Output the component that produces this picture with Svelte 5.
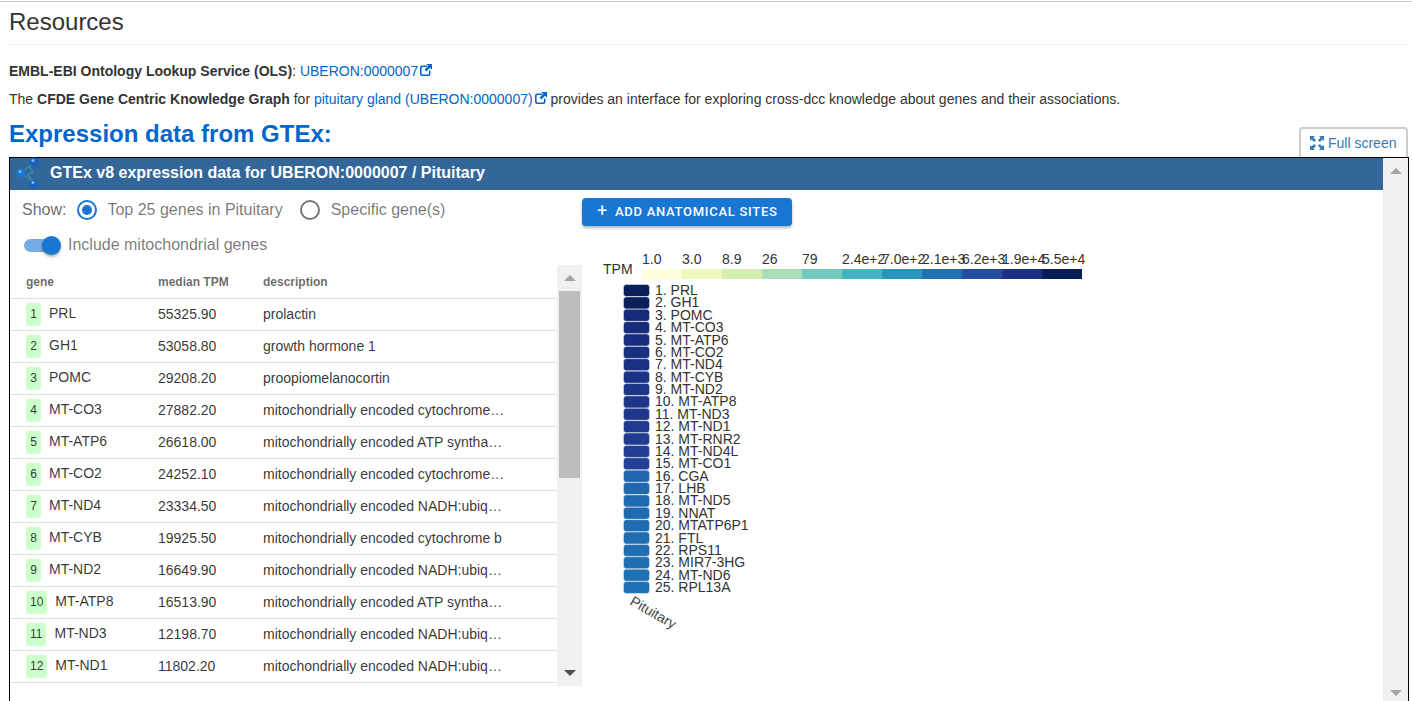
<script>
  const rows = [
    ['PRL', '55325.90', 'prolactin'],
    ['GH1', '53058.80', 'growth hormone 1'],
    ['POMC', '29208.20', 'proopiomelanocortin'],
    ['MT-CO3', '27882.20', 'mitochondrially encoded cytochrome c oxidase III'],
    ['MT-ATP6', '26618.00', 'mitochondrially encoded ATP synthase membrane subunit 6'],
    ['MT-CO2', '24252.10', 'mitochondrially encoded cytochrome c oxidase II'],
    ['MT-ND4', '23334.50', 'mitochondrially encoded NADH:ubiquinone oxidoreductase core subunit 4'],
    ['MT-CYB', '19925.50', 'mitochondrially encoded cytochrome b'],
    ['MT-ND2', '16649.90', 'mitochondrially encoded NADH:ubiquinone oxidoreductase core subunit 2'],
    ['MT-ATP8', '16513.90', 'mitochondrially encoded ATP synthase membrane subunit 8'],
    ['MT-ND3', '12198.70', 'mitochondrially encoded NADH:ubiquinone oxidoreductase core subunit 3'],
    ['MT-ND1', '11802.20', 'mitochondrially encoded NADH:ubiquinone oxidoreductase core subunit 1']
  ];

  const genes = ['PRL', 'GH1', 'POMC', 'MT-CO3', 'MT-ATP6', 'MT-CO2', 'MT-ND4', 'MT-CYB', 'MT-ND2', 'MT-ATP8',
    'MT-ND3', 'MT-ND1', 'MT-RNR2', 'MT-ND4L', 'MT-CO1', 'CGA', 'LHB', 'MT-ND5', 'NNAT', 'MTATP6P1',
    'FTL', 'RPS11', 'MIR7-3HG', 'MT-ND6', 'RPL13A'];

  const legend = [
    ['1.0', '#ffffd9'], ['3.0', '#eff9bd'], ['8.9', '#d5efb3'], ['26', '#a9ddb7'], ['79', '#73c9bd'],
    ['2.4e+2', '#45b4c2'], ['7.0e+2', '#2897bf'], ['2.1e+3', '#2073b2'], ['6.2e+3', '#234ea0'],
    ['1.9e+4', '#1c3185'], ['5.5e+4', '#081d58']
  ];

  function mix(a, b, t) {
    const c = a.map((v, i) => Math.round(v + (b[i] - v) * t));
    return `rgb(${c[0]},${c[1]},${c[2]})`;
  }

  // darkest bucket, then the two blue ranges of the scale
  function heat(i) {
    if (i < 2) return '#0a1f5c';
    if (i < 15) return mix([22, 41, 120], [35, 63, 150], (i - 2) / 12);
    return mix([34, 102, 173], [30, 115, 180], (i - 15) / 9);
  }
</script>

{#snippet ext()}
  <svg class="ext" viewBox="0 0 12 12"><path d="M2.200 1.500H7V3H2.800a1.200 1.200 0 0 0-1.200 1.200v5a1.200 1.200 0 0 0 1.200 1.200h5a1.200 1.200 0 0 0 1.200-1.200V6.500h1.500v3.300A2.200 2.200 0 0 1 8.300 12H2.200A2.200 2.200 0 0 1 0 9.800V3.700a2.200 2.200 0 0 1 2.200-2.200z"/><path d="M6.300 0H12v5.700L10 3.800 6.400 7.400 4.600 5.600 8.200 2z"/></svg>
{/snippet}

<div class="page">
  <h2 class="title">Resources</h2>
  <hr />
  <p class="first">
    <b>EMBL-EBI Ontology Lookup Service (OLS)</b>:
    <a href="#ols">UBERON:0000007{@render ext()}</a>
  </p>
  <p class="second">
    The <b>CFDE Gene Centric Knowledge Graph</b> for
    <a href="#kg">pituitary gland (UBERON:0000007){@render ext()}</a>
    provides an interface for exploring cross-dcc knowledge about genes and their associations.
  </p>

  <div class="head-row">
    <h3>Expression data from GTEx:</h3>
    <button class="full">
      <svg viewBox="0 0 14 14" width="14" height="14"><path d="M0 0h5L3.400 1.600 6 4.200 4.200 6 1.600 3.400 0 5zM14 0v5l-1.600-1.600L9.800 6 8 4.200l2.600-2.600L9 0zM0 14V9l1.600 1.600L4.200 8 6 9.800l-2.600 2.600L5 14zM14 14H9l1.600-1.600L8 9.800 9.800 8l2.600 2.600L14 9z"/></svg>
      Full screen
    </button>
  </div>

  <section class="frame">
    <div class="content">
      <header class="bar">
        <svg class="logo" viewBox="0 0 26 36" width="26" height="36">
          <path d="M18 7L6 17l14 11M14 10l4 6-6 3 6 5" fill="none" stroke="#3fa0a8" stroke-width="1" />
          <circle cx="19" cy="6" r="4.500" fill="#1565c0" />
          <circle cx="6" cy="17" r="4.500" fill="#1976d2" />
          <circle cx="19" cy="28" r="4.500" fill="#1565c0" />
          <circle cx="18" cy="4.500" r="1.500" fill="#7db8f0" />
          <circle cx="5" cy="15.500" r="1.500" fill="#7db8f0" />
          <circle cx="18" cy="26.500" r="1.500" fill="#7db8f0" />
        </svg>
        GTEx v8 expression data for UBERON:0000007 / Pituitary
      </header>

      <div class="columns">
        <div class="left">
          <div class="show">
            <span class="show-label">Show:</span>
            <span class="radio on"></span>
            <span class="opt">Top 25 genes in Pituitary</span>
            <span class="radio"></span>
            <span class="opt">Specific gene(s)</span>
          </div>
          <div class="switch-row">
            <span class="switch"><span class="knob"></span></span>
            <span class="opt">Include mitochondrial genes</span>
          </div>

          <div class="table-wrap">
            <div class="table-scroll">
              <table>
                <thead>
                  <tr><th class="c1">gene</th><th class="c2">median TPM</th><th>description</th></tr>
                </thead>
                <tbody>
                  {#each rows as r, i}
                    <tr>
                      <td class="gene"><span class="badge">{i + 1}</span><span class="name">{r[0]}</span></td>
                      <td class="val">{r[1]}</td>
                      <td class="val"><div class="desc">{r[2]}</div></td>
                    </tr>
                  {/each}
                </tbody>
              </table>
            </div>
            <div class="scrollbar small">
              <span class="arrow up"></span>
              <span class="thumb"></span>
              <span class="arrow down"></span>
            </div>
          </div>
        </div>

        <div class="right">
          <button class="add"><span class="plus">+</span>Add anatomical sites</button>
          <svg class="chart" width="520" height="400" viewBox="582 240 520 400">
            <text x="603" y="274" class="lbl">TPM</text>
            {#each legend as l, i}
              <rect x={642 + i * 40} y="269" width="40" height="10" fill={l[1]} />
              <text x={642 + i * 40} y="264" class="lbl">{l[0]}</text>
            {/each}
            {#each genes as g, i}
              <rect x="623.500" y={284.500 + i * 12.375} width="26" height="12" rx="3" fill={heat(i)} stroke="#fff" stroke-opacity="0.4" />
              <text x="655" y={295 + i * 12.375} class="lbl">{i + 1}. {g}</text>
            {/each}
            <text class="site" transform="translate(629 604) rotate(30)">Pituitary</text>
          </svg>
        </div>
      </div>
    </div>
    <div class="scrollbar">
      <span class="arrow up"></span>
      <span class="arrow down"></span>
    </div>
  </section>
</div>

<style>
  :global(body) {
    margin: 0;
    background: #fff;
    font-family: "Liberation Sans", Arial, sans-serif;
    color: #333;
  }

  .page {
    height: 701px;
    box-sizing: border-box;
    overflow: hidden;
    border-top: 1px solid #ccc;
    margin-top: 1px;
    padding: 0 4px 0 9px;
  }

  .title {
    margin: 0;
    padding-top: 4px;
    font-size: 24px;
    line-height: 32px;
    font-weight: 400;
    color: #333;
  }

  hr {
    margin: 6px 0 0;
    border: 0;
    border-top: 1px solid #eee;
  }

  p {
    margin: 0;
    font-size: 14px;
    line-height: 18px;
  }

  .first {
    padding-top: 17px;
  }

  .second {
    padding-top: 10px;
  }

  a {
    color: #0066cc;
    text-decoration: none;
  }

  .ext {
    width: 12px;
    height: 12px;
    margin-left: 2px;
    fill: #0066cc;
  }

  .head-row {
    display: flex;
    justify-content: space-between;
    align-items: flex-end;
    height: 49px;
  }

  h3 {
    margin: 0 0 8px;
    font-size: 24px;
    line-height: 30px;
    font-weight: 700;
    color: #0066cc;
  }

  .full {
    display: flex;
    align-items: center;
    gap: 4px;
    height: 30px;
    width: 109px;
    box-sizing: border-box;
    padding: 0 0 0 9px;
    border: 2px solid #ccc;
    border-bottom: 0;
    border-radius: 4px 4px 0 0;
    background: #fff;
    color: #337ab7;
    font: 14px "Liberation Sans", Arial, sans-serif;
  }

  .full svg {
    fill: #337ab7;
  }

  .frame {
    display: flex;
    width: 1400px;
    height: 547px;
    box-sizing: border-box;
    border: 1px solid #000;
  }

  .content {
    flex: 1;
    min-width: 0;
  }

  .bar {
    display: flex;
    align-items: center;
    height: 30px;
    padding: 0 0 2px 5px;
    gap: 9px;
    background: #336699;
    color: #fff;
    font-size: 16px;
    font-weight: 700;
  }

  .logo {
    flex: none;
    margin-top: 2px;
  }

  .columns {
    display: flex;
  }

  .left {
    width: 572px;
    flex: none;
  }

  .show {
    display: flex;
    align-items: center;
    height: 40px;
    padding-left: 12px;
    font-size: 16px;
  }

  .show-label {
    color: rgba(0, 0, 0, 0.6);
    margin-right: 11px;
  }

  .opt {
    color: rgba(0, 0, 0, 0.54);
    font-size: 16px;
  }

  .radio {
    width: 20px;
    height: 20px;
    box-sizing: border-box;
    border: 2px solid rgba(0, 0, 0, 0.54);
    border-radius: 50%;
    margin-right: 10px;
    position: relative;
  }

  .opt + .radio {
    margin-left: 17px;
    margin-right: 11px;
  }

  .radio.on {
    border-color: #1976d2;
  }

  .radio.on::after {
    content: "";
    position: absolute;
    inset: 3px;
    border-radius: 50%;
    background: #1976d2;
  }

  .switch-row {
    display: flex;
    align-items: center;
    height: 30px;
    padding-left: 14px;
    gap: 8px;
  }

  .switch {
    position: relative;
    display: block;
    width: 36px;
    height: 13px;
    border-radius: 7px;
    background: #76aae2;
  }

  .knob {
    position: absolute;
    right: -1px;
    top: -3px;
    width: 19px;
    height: 19px;
    border-radius: 50%;
    background: #1976d2;
    box-shadow: 0 2px 3px rgba(0, 0, 0, 0.3);
  }

  .table-wrap {
    display: flex;
    height: 421px;
    margin-top: 5px;
  }

  .table-scroll {
    width: 547px;
    overflow: hidden;
    flex: none;
  }

  table {
    width: 547px;
    table-layout: fixed;
    border-collapse: collapse;
    font-size: 14px;
    color: rgba(0, 0, 0, 0.8);
  }

  th {
    height: 33px;
    padding: 0;
    text-align: left;
    font-size: 12px;
    font-weight: 700;
    color: rgba(0, 0, 0, 0.6);
    border-bottom: 1px solid #e0e0e0;
  }

  th.c1 {
    width: 148px;
    padding-left: 16px;
    box-sizing: border-box;
  }

  th.c2 {
    width: 105px;
  }

  td {
    height: 31px;
    padding: 0;
    border-bottom: 1px solid #e0e0e0;
  }

  td.val {
    height: 29px;
    padding-bottom: 2px;
  }

  .gene {
    padding-left: 16px;
    white-space: nowrap;
  }

  .badge {
    display: inline-block;
    min-width: 15px;
    padding: 0 4px;
    box-sizing: border-box;
    height: 23px;
    line-height: 23px;
    text-align: center;
    border-radius: 3px;
    background: #ccffcc;
    font-size: 12px;
    vertical-align: middle;
  }

  .name {
    margin-left: 8px;
  }

  .desc {
    width: 245px;
    overflow: hidden;
    white-space: nowrap;
    text-overflow: ellipsis;
  }

  .scrollbar {
    flex: none;
    width: 25px;
    background: #f0f0f0;
    position: relative;
  }

  .small .thumb {
    position: absolute;
    left: 2px;
    right: 2px;
    top: 26px;
    height: 187px;
    background: #bdbdbd;
  }

  .arrow {
    position: absolute;
    left: 7px;
    width: 0;
    height: 0;
    border-left: 6px solid transparent;
    border-right: 6px solid transparent;
  }

  .arrow.up {
    top: 10px;
    border-bottom: 6px solid #a3a3a3;
  }

  .arrow.down {
    bottom: 10px;
    border-top: 6px solid #505050;
  }

  .frame > .scrollbar .arrow.down {
    border-top-color: #a3a3a3;
    bottom: 7px;
  }

  .right {
    flex: 1;
    min-width: 0;
  }

  .add {
    display: flex;
    align-items: center;
    height: 28px;
    width: 210px;
    margin-top: 8px;
    padding: 0 0 2px 15px;
    border: 0;
    border-radius: 4px;
    background: #1976d2;
    color: #fff;
    font: 500 13px Roboto, sans-serif;
    letter-spacing: 0.72px;
    text-transform: uppercase;
    box-shadow: 0 2px 3px rgba(0, 0, 0, 0.3);
  }

  .plus {
    font-size: 18px;
    font-weight: 400;
    margin-right: 7px;
    line-height: 1;
  }

  .chart {
    display: block;
    margin-top: 14px;
  }

  .lbl {
    font: 14px "Liberation Sans", Arial, sans-serif;
    fill: #333;
  }

  .site {
    font: 14px "Liberation Sans", Arial, sans-serif;
    fill: #444;
  }
</style>
